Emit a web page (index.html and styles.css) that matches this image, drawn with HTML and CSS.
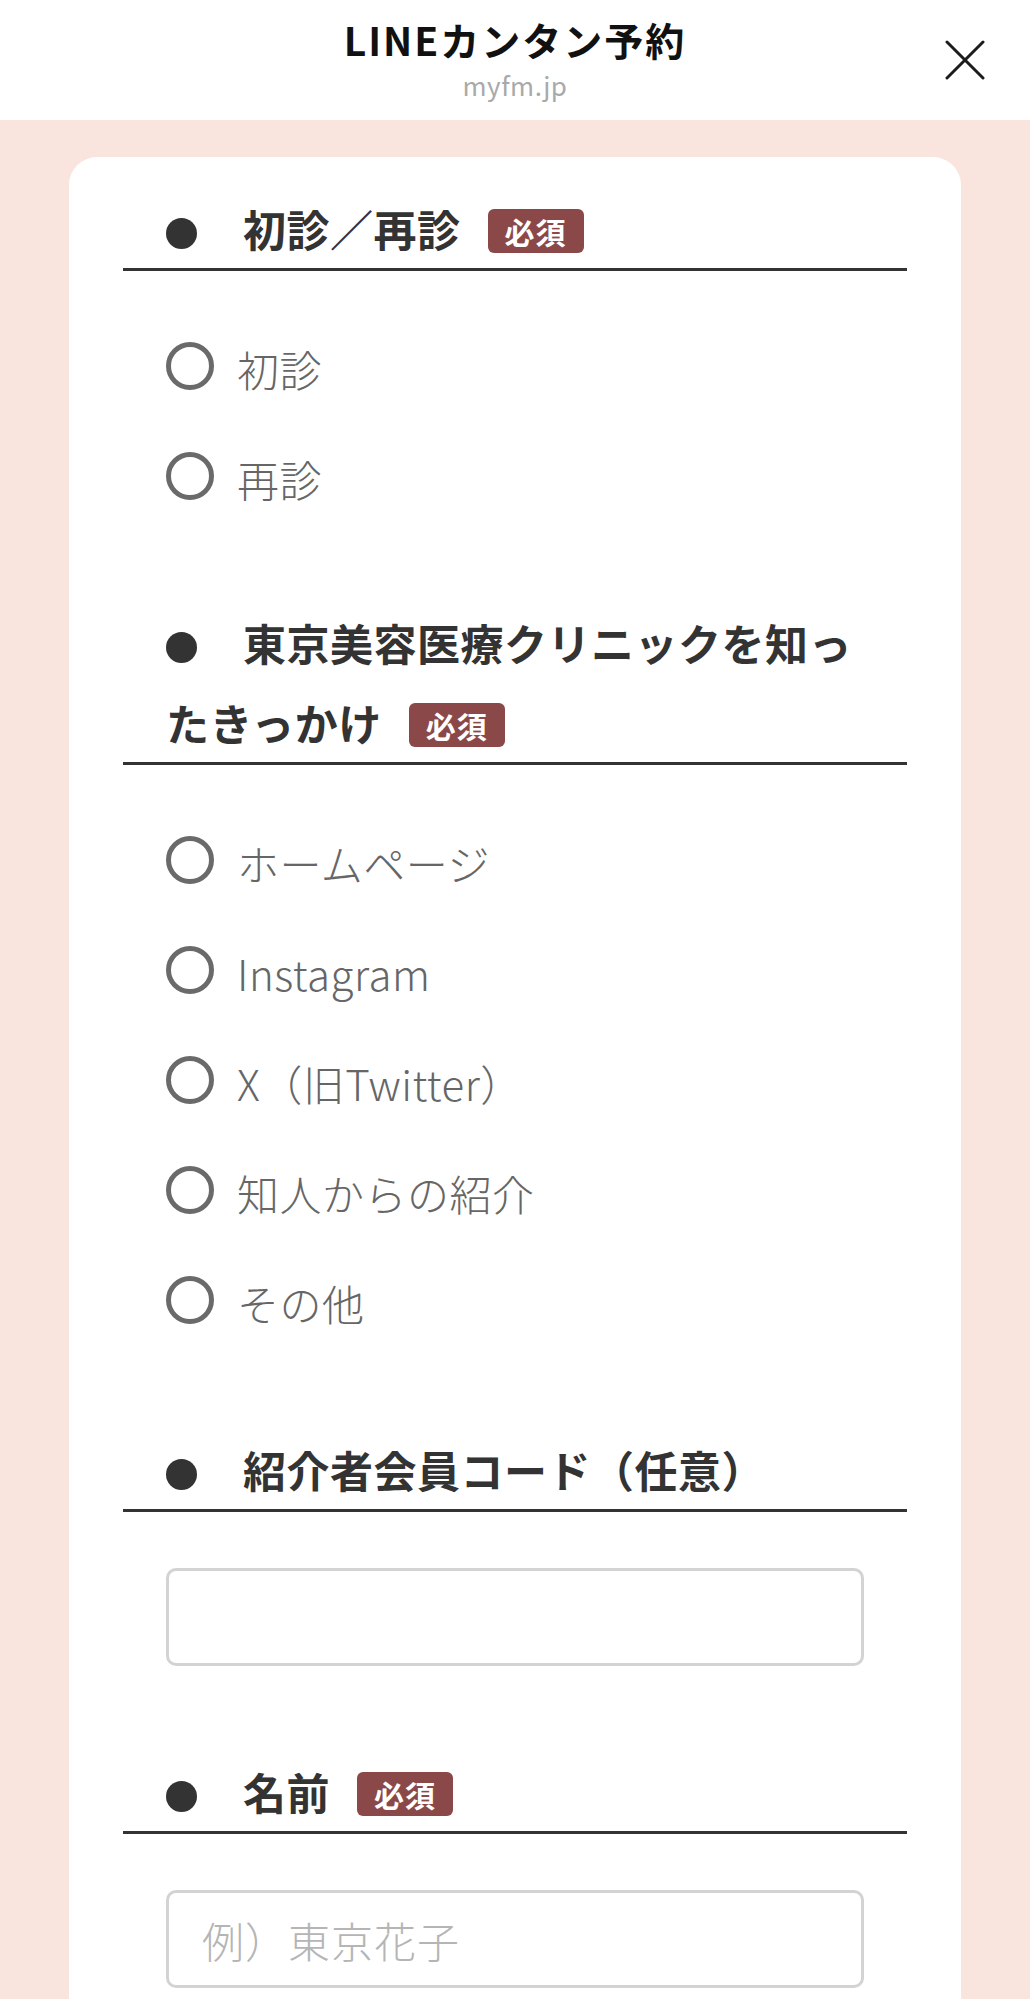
FILE: index.html
```html
<!DOCTYPE html>
<html lang="ja">
<head>
<meta charset="utf-8">
<title>LINEカンタン予約</title>
<link rel="stylesheet" href="styles.css">
</head>
<body>
<header class="topbar">
  <div class="topbar-spacer"></div>
  <div class="topbar-titles">
    <div class="topbar-title">LINEカンタン予約</div>
    <div class="topbar-domain">myfm.jp</div>
  </div>
  <button class="topbar-close" type="button" aria-label="閉じる">
    <svg viewBox="0 0 40 40" width="40" height="40" aria-hidden="true">
      <path d="M2 2 L38 38 M38 2 L2 38" stroke="#1c1c1c" stroke-width="3" stroke-linecap="round" fill="none"/>
    </svg>
  </button>
</header>

<main class="page">
  <form class="card">
    <section class="field">
      <h2 class="field-title"><span class="dot"></span><span class="title-text">初診／再診</span><span class="badge">必須</span></h2>
      <div class="radio-list">
        <label class="radio-row"><input type="radio" name="visit"><span class="radio-text">初診</span></label>
        <label class="radio-row"><input type="radio" name="visit"><span class="radio-text">再診</span></label>
      </div>
    </section>

    <section class="field">
      <h2 class="field-title"><span class="dot"></span><span class="title-text">東京美容医療クリニックを知ったきっかけ</span><span class="badge">必須</span></h2>
      <div class="radio-list">
        <label class="radio-row"><input type="radio" name="source"><span class="radio-text">ホームページ</span></label>
        <label class="radio-row"><input type="radio" name="source"><span class="radio-text">Instagram</span></label>
        <label class="radio-row"><input type="radio" name="source"><span class="radio-text">X（旧Twitter）</span></label>
        <label class="radio-row"><input type="radio" name="source"><span class="radio-text">知人からの紹介</span></label>
        <label class="radio-row"><input type="radio" name="source"><span class="radio-text">その他</span></label>
      </div>
    </section>

    <section class="field field--text">
      <h2 class="field-title"><span class="dot"></span><span class="title-text">紹介者会員コード（任意）</span></h2>
      <div class="input-wrap">
        <input class="text-input" type="text">
      </div>
    </section>

    <section class="field field--text">
      <h2 class="field-title"><span class="dot"></span><span class="title-text">名前</span><span class="badge">必須</span></h2>
      <div class="input-wrap">
        <input class="text-input" type="text" placeholder="例）東京花子">
      </div>
    </section>
  </form>
</main>
</body>
</html>
```

FILE: styles.css
```css
* {
  box-sizing: border-box;
}

html, body {
  margin: 0;
  padding: 0;
}

body {
  background: #fae4de;
  font-family: "Noto Sans CJK JP", "Noto Sans", sans-serif;
  color: #333;
}

/* ---------- top bar ---------- */
.topbar {
  height: 120px;
  background: #ffffff;
  display: grid;
  grid-template-columns: 1fr auto 1fr;
  align-items: start;
}

.topbar-titles {
  display: flex;
  flex-direction: column;
  align-items: center;
  padding-top: 14px;
}

.topbar-title {
  font-size: 39px;
  font-weight: 700;
  line-height: 50px;
  letter-spacing: 2px;
  color: #111;
  white-space: nowrap;
}

.topbar-domain {
  margin-top: 5px;
  font-size: 26px;
  line-height: 32px;
  color: #a9a9a9;
  letter-spacing: 0.5px;
}

.topbar-close {
  justify-self: end;
  margin: 40px 45px 0 0;
  padding: 0;
  border: 0;
  background: none;
  width: 40px;
  height: 40px;
  display: block;
}

.topbar-close svg {
  display: block;
}

/* ---------- page ---------- */
.page {
  padding: 37px 69px 0;
}

.card {
  background: #ffffff;
  border-radius: 28px 28px 0 0;
  padding: 31px 54px 120px;
}

.field--text {
  padding-top: 3px;
}

.field-title {
  margin: 0;
  padding: 0 43px;
  font-size: 43px;
  font-weight: 700;
  line-height: 80px;
  letter-spacing: 0.5px;
  color: #333;
  border-bottom: 3px solid #333;
}

.dot {
  display: inline-block;
  width: 31px;
  height: 31px;
  border-radius: 50%;
  background: #333;
  margin-right: 46px;
  vertical-align: -2px;
}

.badge {
  display: inline-block;
  margin-left: 27px;
  padding: 0 17px;
  height: 44px;
  line-height: 44px;
  border-radius: 6px;
  background: #8b4848;
  color: #ffffff;
  font-size: 30px;
  font-weight: 700;
  letter-spacing: 1px;
  vertical-align: 3px;
}

.radio-list {
  display: flex;
  flex-direction: column;
  padding: 40px 43px 0;
  margin-bottom: 71px;
}

.radio-row {
  height: 110px;
  display: flex;
  align-items: center;
  gap: 23px;
}

.radio-row input {
  appearance: none;
  -webkit-appearance: none;
  margin: 0;
  width: 48px;
  height: 48px;
  flex: none;
  border: 5px solid #6a6a6a;
  border-radius: 50%;
  background: #fff;
}

.radio-text {
  font-size: 42px;
  font-weight: 300;
  line-height: 60px;
  color: #666;
  letter-spacing: 0.5px;
  padding-top: 6px;
}

.input-wrap {
  padding: 56px 43px 0;
  margin-bottom: 82px;
}

.text-input {
  display: block;
  width: 100%;
  height: 98px;
  border: 3px solid #d3d3d3;
  border-radius: 10px;
  padding: 0 30px 0 33px;
  font-family: inherit;
  font-size: 42px;
  font-weight: 300;
  letter-spacing: 1px;
  color: #333;
  background: #fff;
  outline: none;
}

.text-input::placeholder {
  color: #b5b5b5;
}
```
